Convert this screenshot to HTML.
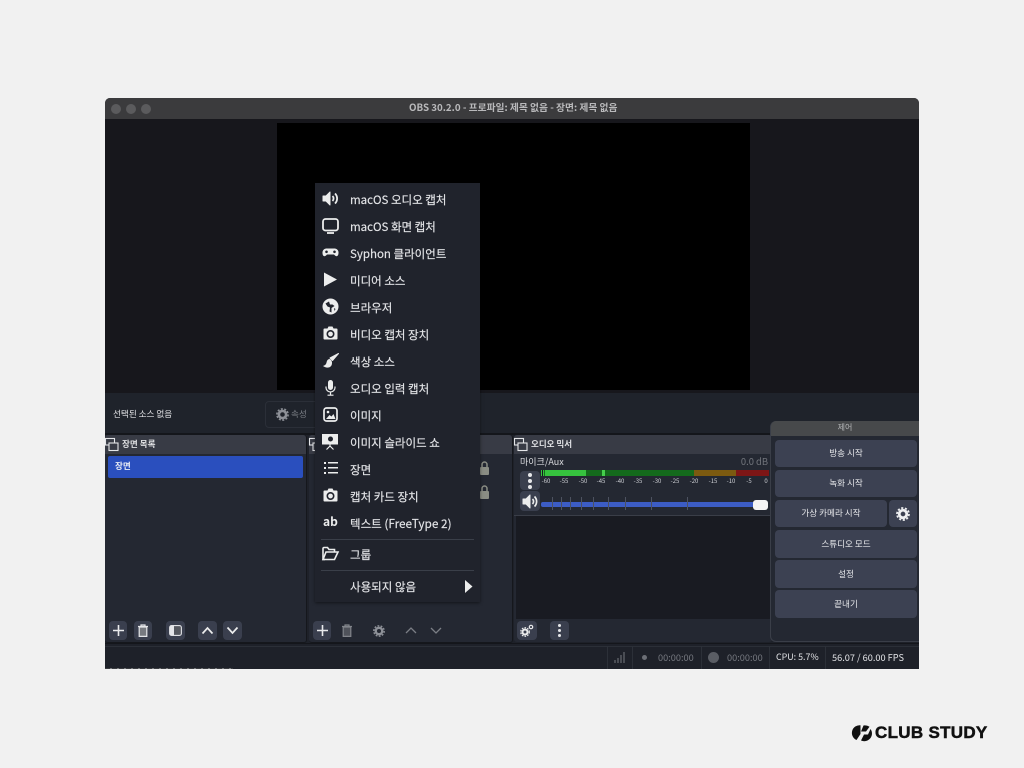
<!DOCTYPE html>
<html><head><meta charset="utf-8">
<style>
html,body{margin:0;padding:0;width:1024px;height:768px;overflow:hidden;background:#f1f1f1;font-family:"Noto Sans CJK KR","Liberation Sans",sans-serif}
body{filter:blur(.3px)}
.a{position:absolute}
.t{position:absolute;white-space:nowrap;line-height:1}
.btn{position:absolute;background:#3a3f4e;border-radius:4px}
.ctl{position:absolute;background:#3c4152;border-radius:4px;color:#e6e7ea;font-size:8.6px;text-align:center}
.mi{position:absolute;left:350px;font-size:11.5px;line-height:16px;color:#e4e5e8;white-space:nowrap;-webkit-text-stroke:.15px #e4e5e8;margin-top:.5px}
svg{position:absolute;overflow:visible}
.sep{position:absolute;background:#3a3f49;height:1px}
.tick{position:absolute;font-size:6px;color:#ccced3;line-height:1;transform:translateX(-50%)}
.st{position:absolute;top:651px;font-size:9.2px;line-height:12px;white-space:nowrap}
.sl{position:absolute;top:646px;width:1px;height:23px;background:#2c3038}
</style></head><body>
<!-- window -->
<div class="a" style="left:105px;top:98px;width:814px;height:571px;background:#1e2129;border-radius:5px 5px 0 0;overflow:hidden">
<div class="a" style="left:0;top:0;width:814px;height:21px;background:#3b3b3d"></div>
<div class="a" style="left:0;top:21px;width:814px;height:274px;background:#17171c"></div>
<div class="a" style="left:172px;top:25px;width:473px;height:267px;background:#000"></div>
<div class="a" style="left:0;top:295px;width:814px;height:40px;background:#1f232b"></div>
<div class="a" style="left:0;top:335px;width:814px;height:2px;background:#14161b"></div>
<div class="a" style="left:0;top:545px;width:814px;height:1px;background:#14161b"></div>
<div class="a" style="left:0;top:548px;width:814px;height:1px;background:#2b2f37"></div>
</div>
<div class="a" style="left:105px;top:668px;width:128px;height:1px;background:repeating-linear-gradient(90deg,#3a3c40 0 5px,#77797c 5px 7px)"></div>
<div class="a" style="left:111px;top:104px;width:10px;height:10px;border-radius:50%;background:#5b5b5d"></div>
<div class="a" style="left:126px;top:104px;width:10px;height:10px;border-radius:50%;background:#5b5b5d"></div>
<div class="a" style="left:141px;top:104px;width:10px;height:10px;border-radius:50%;background:#5b5b5d"></div>
<div class="t" style="left:409px;top:103px;font-size:9.75px;font-weight:bold;color:#b9b9bb">OBS 30.2.0 - 프로파일: 제목 없음 - 장면: 제목 없음</div>

<!-- source toolbar -->
<div class="t" style="left:113px;top:410px;font-size:8.6px;color:#e2e3e6">선택된 소스 없음</div>
<div class="a" style="left:265px;top:401px;width:60px;height:27px;border:1px solid #2b2f38;border-radius:4px;box-sizing:border-box"></div>
<svg style="left:276px;top:408px" width="13" height="13" viewBox="0 0 13 13"><circle cx="6.5" cy="6.5" r="3.6" fill="none" stroke="#8d9097" stroke-width="2.6"/><circle cx="6.5" cy="6.5" r="5.6" fill="none" stroke="#8d9097" stroke-width="1.6" stroke-dasharray="2 1.5"/></svg>
<div class="t" style="left:291px;top:410px;font-size:8.6px;color:#7d8087">속성</div>

<!-- scenes dock -->
<div class="a" style="left:105px;top:435px;width:201px;height:207px;background:#242832;border-radius:0 3px 3px 3px;border-right:1px solid #15171c;border-bottom:1px solid #15171c"></div>
<div class="a" style="left:105px;top:435px;width:201px;height:19px;background:#383b45;border-radius:3px 3px 0 0"></div>
<svg style="left:105px;top:438px" width="14" height="14" viewBox="0 0 14 14" fill="none" stroke="#e4e5e8" stroke-width="1.1"><rect x=".5" y=".5" width="9" height="6.5" fill="#383b45"/><rect x="4" y="5" width="9" height="7.500" fill="#383b45"/></svg>
<div class="t" style="left:122px;top:440px;font-size:8.6px;font-weight:bold;color:#dfe0e3">장면 목록</div>
<div class="a" style="left:108px;top:456px;width:195px;height:22px;background:#2a4fbe;border-radius:2px"></div>
<div class="t" style="left:115px;top:462px;font-size:8.6px;font-weight:bold;color:#e9ecf5">장면</div>

<!-- sources dock -->
<div class="a" style="left:309px;top:435px;width:203px;height:207px;background:#242832;border-radius:3px;border-right:1px solid #15171c;border-bottom:1px solid #15171c"></div>
<div class="a" style="left:309px;top:435px;width:203px;height:19px;background:#383b45;border-radius:3px 3px 0 0"></div>
<svg style="left:309px;top:438px" width="14" height="14" viewBox="0 0 14 14" fill="none" stroke="#e4e5e8" stroke-width="1.1"><rect x=".5" y=".5" width="9" height="6.5" fill="#383b45"/><rect x="4" y="5" width="9" height="7.500" fill="#383b45"/></svg>
<svg style="left:479px;top:461px" width="11" height="14" viewBox="0 0 11 14"><rect x="1" y="6" width="9" height="8" rx="1" fill="#8a8d84"/><path d="M3 6V3.500a2.500 2.500 0 0 1 5 0V6" fill="none" stroke="#8a8d84" stroke-width="1.500"/></svg>
<svg style="left:479px;top:485px" width="11" height="14" viewBox="0 0 11 14"><rect x="1" y="6" width="9" height="8" rx="1" fill="#8a8d84"/><path d="M3 6V3.500a2.500 2.500 0 0 1 5 0V6" fill="none" stroke="#8a8d84" stroke-width="1.500"/></svg>

<!-- mixer dock -->
<div class="a" style="left:514px;top:435px;width:258px;height:207px;background:#242832;border-radius:3px"></div>
<div class="a" style="left:514px;top:435px;width:258px;height:19px;background:#383b45;border-radius:3px 3px 0 0"></div>
<svg style="left:514px;top:438px" width="14" height="14" viewBox="0 0 14 14" fill="none" stroke="#e4e5e8" stroke-width="1.1"><rect x=".5" y=".5" width="9" height="6.5" fill="#383b45"/><rect x="4" y="5" width="9" height="7.500" fill="#383b45"/></svg>
<div class="t" style="left:531px;top:440px;font-size:8.5px;font-weight:bold;color:#dfe0e3">오디오 믹서</div>
<div class="a" style="left:516px;top:516px;width:254px;height:103px;background:#191b22"></div>
<div class="a" style="left:514px;top:515px;width:258px;height:1px;background:#3a3e48"></div>
<div class="t" style="left:520px;top:457px;font-size:9px;color:#dcdde0">마이크/Aux</div>
<div class="t" style="right:256px;top:457px;font-size:9.4px;color:#72757c">0.0 dB</div>
<div class="btn" style="left:520px;top:471px;width:20px;height:19px"></div>
<div class="a" style="left:528px;top:473px;width:4px;height:4px;border-radius:50%;background:#e6e7ea"></div>
<div class="a" style="left:528px;top:479px;width:4px;height:4px;border-radius:50%;background:#e6e7ea"></div>
<div class="a" style="left:528px;top:485px;width:4px;height:4px;border-radius:50%;background:#e6e7ea"></div>
<div class="btn" style="left:520px;top:491px;width:20px;height:20px"></div>
<svg style="left:522px;top:494px" width="17" height="15" viewBox="0 0 17 15"><path d="M1 5h3l4-4v13l-4-4H1z" fill="#eceded" stroke="#eceded" stroke-linejoin="round"/><path d="M10.500 5a3.500 3.500 0 0 1 0 5M12.500 2.500a7 7 0 0 1 0 10" fill="none" stroke="#eceded" stroke-width="1.700"/></svg>
<!-- meter -->
<div class="a" style="left:541px;top:470px;width:153px;height:6px;background:#146a1c"></div>
<div class="a" style="left:541px;top:470px;width:45px;height:6px;background:#36c23e"></div>
<div class="a" style="left:542px;top:470px;width:1px;height:6px;background:#16181d"></div>
<div class="a" style="left:544px;top:470px;width:1px;height:6px;background:#146a1c"></div>
<div class="a" style="left:602px;top:470px;width:3px;height:6px;background:#45d04c"></div>
<div class="a" style="left:694px;top:470px;width:42px;height:6px;background:#7c5a10"></div>
<div class="a" style="left:736px;top:470px;width:33px;height:6px;background:#7d1616"></div>
<div class="tick" style="left:546px;top:478px">-60</div>
<div class="tick" style="left:564px;top:478px">-55</div>
<div class="tick" style="left:583px;top:478px">-50</div>
<div class="tick" style="left:601px;top:478px">-45</div>
<div class="tick" style="left:620px;top:478px">-40</div>
<div class="tick" style="left:638px;top:478px">-35</div>
<div class="tick" style="left:657px;top:478px">-30</div>
<div class="tick" style="left:675px;top:478px">-25</div>
<div class="tick" style="left:694px;top:478px">-20</div>
<div class="tick" style="left:713px;top:478px">-15</div>
<div class="tick" style="left:731px;top:478px">-10</div>
<div class="tick" style="left:749px;top:478px">-5</div>
<div class="tick" style="left:766px;top:478px">0</div>
<!-- slider -->
<div class="a" style="left:541px;top:502px;width:215px;height:5px;background:#3c5cc4;border-radius:2px"></div>
<svg style="left:541px;top:497px" width="180" height="15" stroke="#4d5260" stroke-width="1"><path d="M11.500 0V13M20.500 0V13M29.500 0V13M40.500 0V13M52.500 0V13M67.500 0V13M84.500 0V13M110.500 0V13M146.500 0V13"/></svg>
<div class="a" style="left:753px;top:500px;width:15px;height:10px;background:#f4f4f4;border-radius:3px"></div>

<!-- bottom toolbars -->
<div class="btn" style="left:109px;top:621px;width:18px;height:19px"></div>
<svg style="left:112px;top:624px" width="13" height="13" stroke="#e9eaec" stroke-width="1.6"><path d="M6.500 1V12M1 6.500H12"/></svg>
<div class="btn" style="left:134px;top:621px;width:18px;height:19px"></div>
<svg style="left:137px;top:624px" width="12" height="13" viewBox="0 0 12 13"><path d="M1 2.500H11M4 2.500V1H8V2.500" fill="none" stroke="#e4e5e8" stroke-width="1.200"/><path d="M2.200 3H9.800V12.400H2.200z" fill="#777a80" stroke="#e4e5e8" stroke-width="1.200"/></svg>
<div class="btn" style="left:166px;top:621px;width:19px;height:19px"></div>
<svg style="left:169px;top:625px" width="13" height="11" viewBox="0 0 13 11"><rect x=".6" y=".6" width="11.800" height="9.800" rx="2" fill="#55585f" stroke="#dfe0e3" stroke-width="1.100"/><rect x="1" y="1" width="4" height="9" fill="#e4e5e8"/></svg>
<div class="btn" style="left:198px;top:621px;width:19px;height:19px"></div>
<svg style="left:201px;top:626px" width="13" height="9" fill="none" stroke="#eceded" stroke-width="1.700"><path d="M1.500 7.500L6.500 2L11.500 7.500"/></svg>
<div class="btn" style="left:223px;top:621px;width:19px;height:19px"></div>
<svg style="left:226px;top:626px" width="13" height="9" fill="none" stroke="#eceded" stroke-width="1.700"><path d="M1.500 1.500L6.500 7L11.500 1.500"/></svg>
<div class="btn" style="left:313px;top:621px;width:18px;height:19px"></div>
<svg style="left:316px;top:624px" width="13" height="13" stroke="#e9eaec" stroke-width="1.6"><path d="M6.500 1V12M1 6.500H12"/></svg>
<svg style="left:341px;top:624px" width="12" height="13" viewBox="0 0 12 13"><path d="M1 2.500H11M4 2.500V1H8V2.500" fill="none" stroke="#81848a" stroke-width="1.200"/><path d="M2.200 3H9.800V12.400H2.200z" fill="#4f525a" stroke="#81848a" stroke-width="1.200"/></svg>
<svg style="left:373px;top:625px" width="12" height="12" viewBox="0 0 13 13"><circle cx="6.500" cy="6.500" r="3.500" fill="none" stroke="#8d9097" stroke-width="2.600"/><circle cx="6.500" cy="6.500" r="5.600" fill="none" stroke="#8d9097" stroke-width="1.600" stroke-dasharray="2 1.500"/></svg>
<svg style="left:405px;top:626px" width="12" height="9" fill="none" stroke="#7b7e85" stroke-width="1.300"><path d="M1 7L6 2L11 7"/></svg>
<svg style="left:430px;top:626px" width="12" height="9" fill="none" stroke="#7b7e85" stroke-width="1.300"><path d="M1 2L6 7L11 2"/></svg>
<div class="btn" style="left:517px;top:621px;width:20px;height:19px"></div>
<svg style="left:520px;top:624px" width="14" height="13" viewBox="0 0 14 13"><circle cx="5" cy="8" r="2.500" fill="none" stroke="#eceded" stroke-width="2"/><circle cx="5" cy="8" r="4.300" fill="none" stroke="#eceded" stroke-width="1.200" stroke-dasharray="1.600 1.200"/><circle cx="11" cy="3" r="1.700" fill="none" stroke="#eceded" stroke-width="1.200"/></svg>
<div class="btn" style="left:550px;top:621px;width:19px;height:19px"></div>
<div class="a" style="left:558px;top:624px;width:3px;height:3px;border-radius:50%;background:#e6e7ea"></div>
<div class="a" style="left:558px;top:629px;width:3px;height:3px;border-radius:50%;background:#e6e7ea"></div>
<div class="a" style="left:558px;top:634px;width:3px;height:3px;border-radius:50%;background:#e6e7ea"></div>

<!-- controls dock -->
<div class="a" style="left:770px;top:421px;width:149px;height:221px;background:#242832;border:1px solid #3a3e48;border-right:none;box-sizing:border-box;border-radius:6px 0 0 6px"></div>
<div class="a" style="left:771px;top:421px;width:148px;height:15px;background:#47494b;border-radius:5px 0 0 0"></div>
<div class="t" style="left:771px;width:148px;text-align:center;top:424px;font-size:8px;color:#b5b6b8">제어</div>
<div class="ctl" style="left:775px;top:440px;width:142px;height:27px;line-height:27px">방송 시작</div>
<div class="ctl" style="left:775px;top:470px;width:142px;height:27px;line-height:27px">녹화 시작</div>
<div class="ctl" style="left:775px;top:500px;width:112px;height:27px;line-height:27px">가상 카메라 시작</div>
<div class="ctl" style="left:889px;top:500px;width:28px;height:27px"></div>
<svg style="left:896px;top:507px" width="14" height="14" viewBox="0 0 13 13"><circle cx="6.500" cy="6.500" r="3.500" fill="none" stroke="#eeeff1" stroke-width="2.600"/><circle cx="6.500" cy="6.500" r="5.600" fill="none" stroke="#eeeff1" stroke-width="1.600" stroke-dasharray="2 1.500"/></svg>
<div class="ctl" style="left:775px;top:530px;width:142px;height:28px;line-height:28px">스튜디오 모드</div>
<div class="ctl" style="left:775px;top:560px;width:142px;height:28px;line-height:28px">설정</div>
<div class="ctl" style="left:775px;top:590px;width:142px;height:28px;line-height:28px">끝내기</div>

<!-- status bar -->
<div class="sl" style="left:607px"></div>
<div class="sl" style="left:632px"></div>
<div class="sl" style="left:701px"></div>
<div class="sl" style="left:769px"></div>
<div class="sl" style="left:825px"></div>
<svg style="left:613px;top:651px" width="14" height="12" fill="#4a4d54"><rect x="1" y="9" width="2" height="3"/><rect x="4" y="7" width="2" height="5"/><rect x="7" y="4" width="2" height="8"/><rect x="10" y="1" width="2" height="11"/></svg>
<div class="a" style="left:642px;top:655px;width:5px;height:5px;border-radius:50%;background:#6c6f76"></div>
<div class="st" style="left:658px;color:#73767d">00:00:00</div>
<div class="a" style="left:708px;top:652px;width:11px;height:11px;border-radius:50%;background:#5a5d64"></div>
<div class="st" style="left:727px;color:#73767d">00:00:00</div>
<div class="st" style="left:776px;color:#e2e3e6;font-size:8.9px">CPU: 5.7%</div>
<div class="st" style="left:832px;color:#e2e3e6">56.07 / 60.00 FPS</div>

<!-- context menu -->
<div class="a" style="left:315px;top:183px;width:165px;height:419px;background:#20232c;box-shadow:0 1px 3px rgba(0,0,0,.5)"></div>
<div class="mi" style="top:191px">macOS 오디오 캡처</div>
<div class="mi" style="top:218px">macOS 화면 캡처</div>
<div class="mi" style="top:245px">Syphon 클라이언트</div>
<div class="mi" style="top:272px">미디어 소스</div>
<div class="mi" style="top:299px">브라우저</div>
<div class="mi" style="top:326px">비디오 캡처 장치</div>
<div class="mi" style="top:353px">색상 소스</div>
<div class="mi" style="top:380px">오디오 입력 캡처</div>
<div class="mi" style="top:407px">이미지</div>
<div class="mi" style="top:434px">이미지 슬라이드 쇼</div>
<div class="mi" style="top:461px">장면</div>
<div class="mi" style="top:488px">캡처 카드 장치</div>
<div class="mi" style="top:515px">텍스트 <span style="font-size:11.8px">(FreeType 2)</span></div>
<div class="sep" style="left:321px;top:539px;width:153px"></div>
<div class="mi" style="top:546px">그룹</div>
<div class="sep" style="left:321px;top:570px;width:153px"></div>
<div class="mi" style="top:578px">사용되지 않음</div>

<!-- menu icons -->
<svg style="left:322px;top:191px" width="17" height="15" viewBox="0 0 17 15"><path d="M1 5h3l4-4v13l-4-4H1z" fill="#eceded" stroke="#eceded" stroke-linejoin="round"/><path d="M10.500 5a3.500 3.500 0 0 1 0 5M13 2.500a7 7 0 0 1 0 10" fill="none" stroke="#eceded" stroke-width="1.800"/></svg>
<svg style="left:322px;top:218px" width="17" height="16" viewBox="0 0 17 16"><rect x="1" y="1" width="15" height="11.500" rx="2.500" fill="none" stroke="#eceded" stroke-width="1.800"/><path d="M5 15H12" stroke="#eceded" stroke-width="1.800"/></svg>
<svg style="left:322px;top:248px" width="17" height="9" viewBox="0 0 17 9"><path d="M4 .5H13A4 4 0 0 1 16.500 5C16.500 8 14.500 9 13 7.500L12 6.500H5L4 7.500C2.500 9 .5 8 .5 5A4 4 0 0 1 4 .5z" fill="#eceded"/><circle cx="4.500" cy="3.800" r="1.300" fill="#20232c"/><circle cx="12.500" cy="3.800" r="1.300" fill="#20232c"/></svg>
<svg style="left:324px;top:272px" width="14" height="15" viewBox="0 0 14 15"><path d="M0 0.500L13 7.500L0 14.500z" fill="#eceded"/></svg>
<svg style="left:322px;top:298px" width="17" height="17" viewBox="0 0 17 17"><circle cx="8.500" cy="8.500" r="8" fill="#eceded"/><path d="M7 3.500l-3.500 2 2 3 2.500 1-.5 4 2 1V10l3-2-2-1.500H8zM12 10l1.500 1-1 2z" fill="#20232c"/></svg>
<svg style="left:323px;top:326px" width="15" height="14" viewBox="0 0 15 14"><path d="M1.500 2.500H4.500L5.500 .5H9.500L10.500 2.500H13.500A1 1 0 0 1 14.500 3.500V12.500A1 1 0 0 1 13.500 13.500H1.500A1 1 0 0 1 .5 12.500V3.500A1 1 0 0 1 1.500 2.500z" fill="#eceded"/><circle cx="7.500" cy="8" r="3.200" fill="none" stroke="#20232c" stroke-width="1.600"/></svg>
<svg style="left:323px;top:353px" width="16" height="15" viewBox="0 0 16 15"><path d="M15.500 .5L7 5 9.500 7.500z" fill="#eceded" stroke="#eceded" stroke-linejoin="round"/><path d="M6.500 6C3.500 6.500 4 9 3 11 2.500 12 1 12.500 0 13 3 15.500 9 15.500 9 10 9.300 8.500 8 6.500 6.500 6z" fill="#eceded"/></svg>
<svg style="left:325px;top:380px" width="11" height="16" viewBox="0 0 11 16"><rect x="3" y="0" width="5" height="10" rx="2.500" fill="#eceded"/><path d="M1 6.500V7.500A4.500 4.500 0 0 0 10 7.500V6.500M5.500 12V15M2.500 15.200H8.500" fill="none" stroke="#eceded" stroke-width="1.200"/></svg>
<svg style="left:323px;top:407px" width="15" height="15" viewBox="0 0 15 15"><rect x="1" y="1" width="13" height="13" rx="2.500" fill="none" stroke="#eceded" stroke-width="1.700"/><circle cx="5" cy="5" r="1.300" fill="#eceded"/><path d="M3 12L6.500 8 8.500 9.500 10.500 7 12.500 12z" fill="#eceded"/></svg>
<svg style="left:322px;top:434px" width="16" height="16" viewBox="0 0 16 16"><path d="M0 0H16V10.500H0z" fill="#eceded"/><circle cx="8.500" cy="5" r="2.500" fill="#20232c"/><path d="M8 10.500V12M8 12L4.500 15.500M8 12L11.500 15.500" stroke="#eceded" stroke-width="1.200"/></svg>
<svg style="left:324px;top:461px" width="14" height="14" viewBox="0 0 14 14" fill="#eceded"><rect x="0" y="1" width="2" height="2"/><rect x="0" y="6" width="2" height="2"/><rect x="0" y="11" width="2" height="2"/><rect x="4" y="1" width="10" height="1.500"/><rect x="4" y="6" width="10" height="1.500"/><rect x="4" y="11" width="10" height="1.500"/></svg>
<svg style="left:323px;top:488px" width="15" height="14" viewBox="0 0 15 14"><path d="M1.500 2.500H4.500L5.500 .5H9.500L10.500 2.500H13.500A1 1 0 0 1 14.500 3.500V12.500A1 1 0 0 1 13.500 13.500H1.500A1 1 0 0 1 .5 12.500V3.500A1 1 0 0 1 1.500 2.500z" fill="#eceded"/><circle cx="7.500" cy="8" r="3.200" fill="none" stroke="#20232c" stroke-width="1.600"/></svg>
<div class="t" style="left:323px;top:516px;font-size:12px;font-weight:bold;color:#eceded">ab</div>
<svg style="left:322px;top:546px" width="17" height="15" viewBox="0 0 17 15" fill="none" stroke="#eceded" stroke-width="1.600"><path d="M3 13.500H1V2.500A1 1 0 0 1 2 1.500H5.500L7 3.500H12.500V6"/><path d="M1 13.500L4 6H16L12.500 13.500z"/></svg>
<svg style="left:465px;top:580px" width="8" height="13" viewBox="0 0 8 13"><path d="M0 0L7.500 6.500 0 13z" fill="#eceded"/></svg>

<!-- logo -->
<svg style="left:853px;top:725px" width="19" height="16" viewBox="0 0 19 16"><path d="M7.500 0.300A7.700 7.700 0 0 0 3.500 15L7.500 9z" fill="#111"/><path d="M10.500 .5C13 .2 15 .8 16.500 1.800L13 6.500H8z" fill="#111"/><path d="M17.500 4A7.700 7.700 0 0 1 8 15.500L11 9.500H15z" fill="#111"/></svg>
<div class="t" style="left:875px;top:724px;font-size:17px;font-weight:bold;color:#111;font-family:'Liberation Sans',sans-serif;-webkit-text-stroke:.5px #111;letter-spacing:.3px;line-height:17px">CLUB STUDY</div>
</body></html>
